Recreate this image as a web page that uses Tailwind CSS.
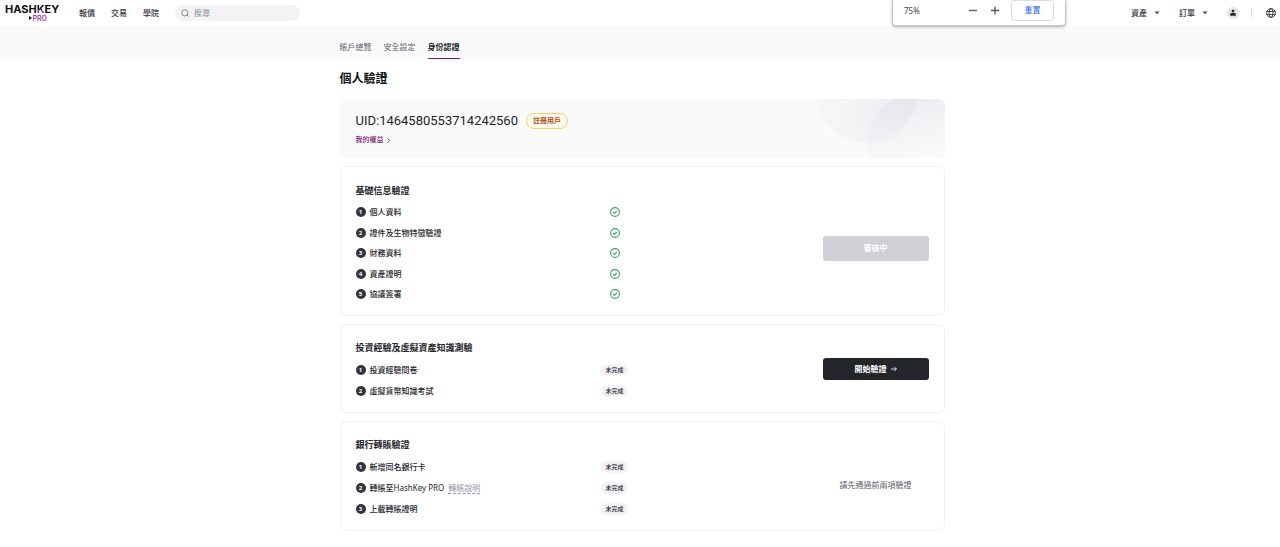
<!DOCTYPE html>
<html lang="zh-Hant">
<head>
<meta charset="utf-8">
<meta name="viewport" content="width=device-width, initial-scale=1">
<title>個人驗證</title>
<script src="https://cdn.jsdelivr.net/npm/@tailwindcss/browser@4"></script>
</head>
<body class="min-h-screen bg-white font-['Noto_Sans','Noto_Sans_CJK_TC',sans-serif] text-[8px] leading-3 text-[#24252b]">

<svg class="hidden">
  <symbol id="check" viewBox="0 0 10 10"><circle cx="5" cy="5" r="4.4" fill="none" stroke="#38a561" stroke-width="1.1"/><path d="M3.1 5.1l1.4 1.3 2.4-2.5" fill="none" stroke="#38a561" stroke-width="1.1"/></symbol>
  <symbol id="caret" viewBox="0 0 6 4"><path d="M.5 .5h5L3 3.3z" fill="#4a4a55"/></symbol>
</svg>

<header class="flex h-[26px] items-center pr-1 pl-[5px] font-medium text-[#33343c]">
  <a href="#" aria-label="HashKey PRO" class="flex w-[54px] flex-col font-['Inter',sans-serif] font-bold">
    <span class="text-[11px] leading-[10px] text-[#111]">HASH<span class="bg-linear-to-b from-[#111] from-50% to-[#a03cae] to-60% bg-clip-text text-transparent">K</span>EY</span>
    <span class="flex items-center gap-px self-end pr-3 text-[7px] leading-[9px] font-semibold text-[#9a3fa5]"><svg class="h-1 w-[3px]" viewBox="0 0 3 4"><path d="M0 0l3 2-3 2z" fill="#111"/></svg>PRO</span>
  </a>
  <nav class="ml-5 flex gap-4">
    <a href="#">報價</a><a href="#">交易</a><a href="#">學院</a>
  </nav>
  <label class="ml-4 flex h-4 w-[125px] items-center gap-[5px] rounded-full bg-[#f3f3f3] pl-1.5">
    <svg class="size-2 shrink-0" viewBox="0 0 8 8" fill="none" stroke="#7c7d87" stroke-width=".9"><circle cx="3.8" cy="3.8" r="3.1"/><path d="M6 6l1.6 1.6"/></svg>
    <input type="search" aria-label="搜尋" placeholder="搜尋" class="w-full min-w-0 bg-transparent font-normal outline-none placeholder:text-[#8f909a]">
  </label>
  <div class="ml-auto flex items-center">
    <button class="flex items-center gap-[7px]">資產<svg class="h-1 w-1.5"><use href="#caret"/></svg></button>
    <button class="ml-[19px] flex items-center gap-[7px]">訂單<svg class="h-1 w-1.5"><use href="#caret"/></svg></button>
    <button aria-label="帳戶" class="ml-[19px]"><svg class="size-3" viewBox="0 0 12 12"><circle cx="6" cy="6" r="6" fill="#e4e4e8"/><circle cx="6" cy="4.1" r="1.4" fill="#24252b"/><path d="M3.2 8.8V7.6c0-1 .6-1.5 1.4-1.5h2.8c.8 0 1.4.5 1.4 1.5v1.2z" fill="#24252b"/></svg></button>
    <span class="ml-3 h-2 w-px bg-[#d5d5da]"></span>
    <button aria-label="語言" class="ml-3.5"><svg class="size-2.5" viewBox="0 0 10 10" fill="none" stroke="#33343c" stroke-width=".9"><circle cx="5" cy="5" r="4.4"/><ellipse cx="5" cy="5" rx="2" ry="4.4"/><path d="M.8 3.5h8.4M.8 6.5h8.4"/></svg></button>
  </div>
</header>

<div role="dialog" aria-label="縮放" class="absolute top-0 right-[214px] flex h-[26px] w-[174px] items-center rounded-b border border-t-0 border-[#c4c4c4] bg-white pr-[11px] pb-[5px] pl-[11px] shadow-[0_1px_3px_rgba(0,0,0,0.3)]">
  <span class="pt-px text-[8px] text-[#3c4043]">75%</span>
  <button aria-label="縮小" class="ml-auto"><svg class="size-2.5" viewBox="0 0 10 10"><path d="M1 5.5h8" stroke="#55585c" stroke-width="1.3"/></svg></button>
  <button aria-label="放大" class="ml-3"><svg class="size-2.5" viewBox="0 0 10 10"><path d="M1 5.5h8M5 1.5v8" stroke="#55585c" stroke-width="1.3"/></svg></button>
  <button class="ml-[11px] h-[21px] w-[43px] rounded-[3px] border border-[#dadce0] text-[8px] font-medium text-[#3f76ea]">重置</button>
</div>

<div class="bg-[#fafafa] pl-1">
  <nav class="mx-auto flex h-[33px] w-full max-w-[605px] items-end gap-3 text-[#5f606b]">
    <a href="#" class="border-b border-transparent pb-[5px]">賬戶總覽</a>
    <a href="#" class="border-b border-transparent pb-[5px]">安全設定</a>
    <a href="#" aria-current="page" class="border-b border-[#81176f] pb-[5px] font-semibold text-[#24252b]">身份認證</a>
  </nav>
</div>

<main class="pl-1">
  <div class="mx-auto flex w-full max-w-[605px] flex-col gap-2 pb-4">
    <h1 class="pt-3 pb-1 text-[12px] leading-4 font-bold text-[#111]">個人驗證</h1>

    <section class="relative overflow-hidden rounded-md bg-[#fafafa] px-4 pt-3 pb-3">
      <svg class="absolute top-0 right-0 h-full w-[128px]" viewBox="0 0 128 59" preserveAspectRatio="xMaxYMin slice">
        <defs>
          <linearGradient id="g1" x1="0" y1=".6" x2="1" y2=".4"><stop offset="0" stop-color="#eeeff3" stop-opacity=".3"/><stop offset="1" stop-color="#e2e4ea"/></linearGradient>
          <linearGradient id="g2" x1=".3" y1="0" x2=".6" y2="1"><stop offset="0" stop-color="#e2e4ea" stop-opacity=".65"/><stop offset="1" stop-color="#f8f8fa" stop-opacity=".5"/></linearGradient>
        </defs>
        <circle cx="49" cy="-8" r="52" fill="url(#g1)" fill-opacity=".8"/>
        <path d="M51 59C47 30 58 12 76 0h52v59z" fill="url(#g2)"/>
      </svg>
      <div class="relative flex items-center gap-2">
        <span class="font-['Roboto',sans-serif] text-[13px] leading-5">UID:1464580553714242560</span>
        <span class="rounded-full border border-[#f9cf6c] bg-[#fffaec] px-1.5 py-px text-[7px] font-semibold text-[#a9511b]">註冊用戶</span>
      </div>
      <a href="#" class="relative mt-[3px] flex items-center gap-[3px] text-[7px] font-medium text-[#81176f]">我的權益<svg class="h-[5px] w-[3px]" viewBox="0 0 3 5"><path d="M.5 .4l2 2.1-2 2.1" fill="none" stroke="#81176f" stroke-width=".8"/></svg></a>
    </section>

    <section class="flex items-center rounded-md border border-[#f1f1f3] px-[15px] pt-[17px] pb-[15px]">
      <div class="w-[277px]">
        <h2 class="text-[9px] leading-[14px] font-semibold">基礎信息驗證</h2>
        <ol class="mt-2 flex min-h-[94px] flex-col justify-between font-medium">
          <li class="flex items-center gap-1"><span class="size-2.5 rounded-full bg-[#33343c] text-center text-[6px] leading-[10px] font-bold text-white">1</span>個人資料<svg class="mr-[13px] ml-auto size-2.5" role="img" aria-label="已完成"><use href="#check"/></svg></li>
          <li class="flex items-center gap-1"><span class="size-2.5 rounded-full bg-[#33343c] text-center text-[6px] leading-[10px] font-bold text-white">2</span>證件及生物特徵驗證<svg class="mr-[13px] ml-auto size-2.5" role="img" aria-label="已完成"><use href="#check"/></svg></li>
          <li class="flex items-center gap-1"><span class="size-2.5 rounded-full bg-[#33343c] text-center text-[6px] leading-[10px] font-bold text-white">3</span>財務資料<svg class="mr-[13px] ml-auto size-2.5" role="img" aria-label="已完成"><use href="#check"/></svg></li>
          <li class="flex items-center gap-1"><span class="size-2.5 rounded-full bg-[#33343c] text-center text-[6px] leading-[10px] font-bold text-white">4</span>資產證明<svg class="mr-[13px] ml-auto size-2.5" role="img" aria-label="已完成"><use href="#check"/></svg></li>
          <li class="flex items-center gap-1"><span class="size-2.5 rounded-full bg-[#33343c] text-center text-[6px] leading-[10px] font-bold text-white">5</span>協議簽署<svg class="mr-[13px] ml-auto size-2.5" role="img" aria-label="已完成"><use href="#check"/></svg></li>
        </ol>
      </div>
      <button disabled class="mt-3 ml-auto h-[25px] w-[106px] rounded-[3px] bg-[#d0cfd5] font-bold text-white">審核中</button>
    </section>

    <section class="flex items-center rounded-md border border-[#f1f1f3] px-[15px] pt-4 pb-[15px]">
      <div class="w-[272px]">
        <h2 class="text-[9px] leading-[14px] font-semibold">投資經驗及虛擬資產知識測驗</h2>
        <ol class="mt-[9px] flex flex-col gap-[9px] font-medium">
          <li class="flex items-center gap-1"><span class="size-2.5 rounded-full bg-[#33343c] text-center text-[6px] leading-[10px] font-bold text-white">1</span>投資經驗問卷<span class="ml-auto rounded-full bg-[#f3f3f5] px-1 text-[6px]">未完成</span></li>
          <li class="flex items-center gap-1"><span class="size-2.5 rounded-full bg-[#33343c] text-center text-[6px] leading-[10px] font-bold text-white">2</span>虛擬貨幣知識考試<span class="ml-auto rounded-full bg-[#f3f3f5] px-1 text-[6px]">未完成</span></li>
        </ol>
      </div>
      <button class="ml-auto flex h-[22px] w-[106px] items-center justify-center gap-1 rounded-[3px] bg-[#24252b] font-bold text-white">開始驗證<svg class="size-1.5" viewBox="0 0 6 6"><path d="M0 3h5.4M3.2.8L5.4 3 3.2 5.2" fill="none" stroke="#fff" stroke-width=".8"/></svg></button>
    </section>

    <section class="flex items-center rounded-md border border-[#f1f1f3] px-[15px] pt-4 pb-[15px]">
      <div class="w-[272px]">
        <h2 class="text-[9px] leading-[14px] font-semibold">銀行轉賬驗證</h2>
        <ol class="mt-[9px] flex flex-col gap-[9px] font-medium">
          <li class="flex items-center gap-1"><span class="size-2.5 rounded-full bg-[#33343c] text-center text-[6px] leading-[10px] font-bold text-white">1</span>新增同名銀行卡<span class="ml-auto rounded-full bg-[#f3f3f5] px-1 text-[6px]">未完成</span></li>
          <li class="flex items-center gap-1"><span class="size-2.5 rounded-full bg-[#33343c] text-center text-[6px] leading-[10px] font-bold text-white">2</span><span>轉賬至<span class="font-normal">HashKey PRO</span></span><a href="#" class="border-b border-dashed border-[#8f96a5] leading-[10px] font-normal text-[#8f96a5]">轉賬說明</a><span class="ml-auto rounded-full bg-[#f3f3f5] px-1 text-[6px]">未完成</span></li>
          <li class="flex items-center gap-1"><span class="size-2.5 rounded-full bg-[#33343c] text-center text-[6px] leading-[10px] font-bold text-white">3</span>上載轉賬證明<span class="ml-auto rounded-full bg-[#f3f3f5] px-1 text-[6px]">未完成</span></li>
        </ol>
      </div>
      <p class="mt-4 ml-auto w-[106px] text-center text-[#5f606b]">請先通過前兩項驗證</p>
    </section>
  </div>
</main>
</body>
</html>
